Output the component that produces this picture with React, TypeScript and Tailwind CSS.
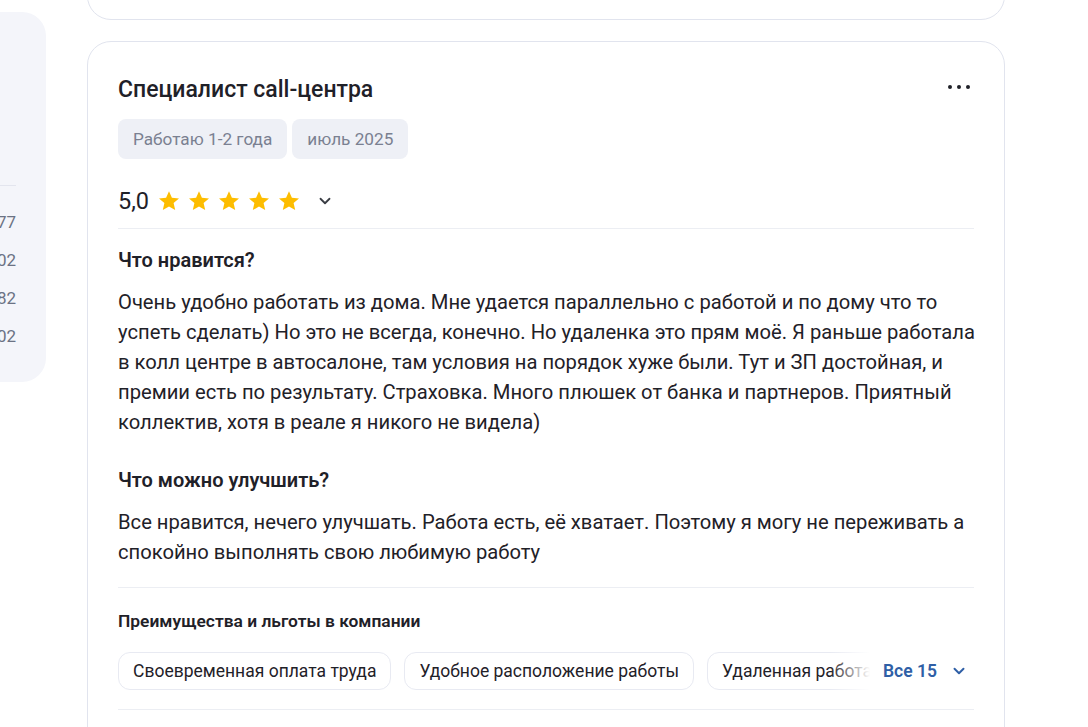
import { ChevronDown } from 'lucide-react';

const font = { fontFamily: 'Roboto, "Noto Sans", sans-serif' };

function Star() {
  return (
    <svg width="24" height="24" viewBox="0 0 24 24" className="shrink-0">
      <path
        d="M12 2.2l2.9 6.6 7.1.6-5.4 4.7 1.6 7-6.2-3.7-6.2 3.7 1.6-7L2 9.4l7.1-.6z"
        fill="#fdbd00"
      />
    </svg>
  );
}

const benefits = [
  'Своевременная оплата труда',
  'Удобное расположение работы',
  'Удаленная работа',
  'ДМС',
];

export default function App() {
  return (
    <div className="min-h-[727px] w-[1088px] overflow-hidden bg-white text-[#1f2128]" style={font}>
      <div className="flex items-start">
        {/* left side panel, partly off-screen */}
        <aside className="ml-[-154px] mt-[12px] flex h-[370px] w-[200px] shrink-0 flex-col rounded-[24px] bg-[#f4f5fa] pr-[30px]">
          <div className="h-[173px]" />
          <div className="h-px bg-[#e3e5ee]" />
          <div className="mt-[26px] flex flex-col items-end gap-[17px] text-[17px] text-[#6b7284]">
            <span className="leading-[21px]">1 277</span>
            <span className="leading-[21px]">1 302</span>
            <span className="leading-[21px]">1 182</span>
            <span className="leading-[21px]">1 102</span>
          </div>
        </aside>

        <main className="ml-[41px] flex w-[918px] shrink-0 flex-col gap-[21px]">
          <div className="mt-[-80px] h-[100px] rounded-[24px] border border-[#e1e4ee]" />

          <section className="rounded-[24px] border border-[#e1e4ee] px-[30px] pt-[33px]">
            <div className="flex items-start justify-between">
              <h2 className="text-[23px] font-medium leading-[30px]">Специалист call-центра</h2>
              <div className="mr-[4px] mt-[10px] flex gap-[5px]">
                <span className="h-[4px] w-[4px] rounded-full bg-[#1f2128]" />
                <span className="h-[4px] w-[4px] rounded-full bg-[#1f2128]" />
                <span className="h-[4px] w-[4px] rounded-full bg-[#1f2128]" />
              </div>
            </div>

            <div className="mt-[14px] flex gap-[5px]">
              <span className="rounded-[8px] bg-[#eef0f6] px-[15px] py-[9px] text-[17.2px] leading-[22px] text-[#7a8091]">
                Работаю 1-2 года
              </span>
              <span className="rounded-[8px] bg-[#eef0f6] px-[15px] py-[9px] text-[17.2px] leading-[22px] text-[#7a8091]">
                июль 2025
              </span>
            </div>

            <div className="mt-[28px] flex items-center">
              <span className="text-[23.5px] leading-[28px]">5,0</span>
              <div className="ml-[8px] flex gap-[6px]">
                <Star />
                <Star />
                <Star />
                <Star />
                <Star />
              </div>
              <ChevronDown className="ml-[15px] h-[18px] w-[18px] text-[#3a3d44]" strokeWidth={2.4} />
            </div>

            <div className="mt-[13px] h-px bg-[#eceef3]" />

            <h3 className="mt-[19px] text-[20px] font-semibold leading-[24px]">Что нравится?</h3>
            <p className="mr-[-8px] mt-[15px] text-[20.2px] leading-[30px]">
              Очень удобно работать из дома. Мне удается параллельно с работой и по дому что то успеть
              сделать) Но это не всегда, конечно. Но удаленка это прям моё. Я раньше работала в колл центре
              в автосалоне, там условия на порядок хуже были. Тут и ЗП достойная, и премии есть по
              результату. Страховка. Много плюшек от банка и партнеров. Приятный коллектив, хотя в реале я
              никого не видела)
            </p>

            <h3 className="mt-[31px] text-[20px] font-semibold leading-[24px]">Что можно улучшить?</h3>
            <p className="mr-[-8px] mt-[15px] text-[20.2px] leading-[30px]">
              Все нравится, нечего улучшать. Работа есть, её хватает. Поэтому я могу не переживать а
              спокойно выполнять свою любимую работу
            </p>

            <div className="mt-[20px] h-px bg-[#eceef3]" />

            <h4 className="mt-[22px] text-[17.4px] font-semibold leading-[22px]">
              Преимущества и льготы в компании
            </h4>

            <div className="relative mt-[20px] flex items-center">
              <div className="flex min-w-0 flex-1 gap-[13px] overflow-hidden">
                {benefits.map((b) => (
                  <span
                    key={b}
                    className="shrink-0 whitespace-nowrap rounded-[12px] border border-[#e8eaf2] px-[14px] py-[8px] text-[17.5px] leading-[20px]"
                  >
                    {b}
                  </span>
                ))}
              </div>
              <div className="absolute right-[104px] top-0 h-full w-[40px] bg-gradient-to-r from-transparent to-white" />
              <button className="flex h-[38px] w-[104px] shrink-0 items-center justify-end gap-[13px] bg-white pr-[6px] text-[17.5px] font-semibold text-[#2f5fa6]">
                Все 15
                <ChevronDown className="h-[18px] w-[18px]" strokeWidth={2.6} />
              </button>
            </div>

            <div className="mt-[19px] h-px bg-[#eceef3]" />
            <div className="h-[60px]" />
          </section>
        </main>
      </div>
    </div>
  );
}
